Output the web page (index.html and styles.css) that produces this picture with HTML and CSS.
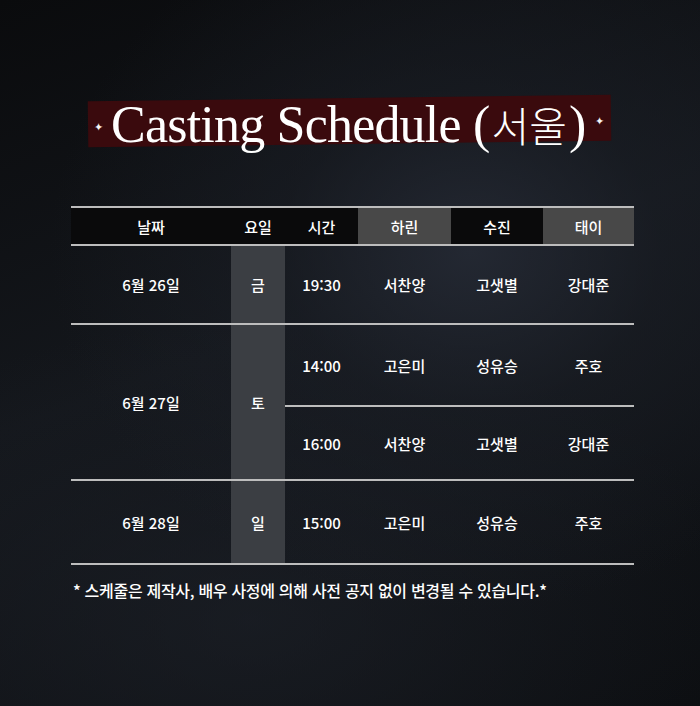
FILE: index.html
```html
<!DOCTYPE html>
<html lang="ko">
<head>
<meta charset="utf-8">
<title>Casting Schedule</title>
<link rel="stylesheet" href="styles.css">
</head>
<body>
<main class="page">
  <header class="title-wrap">
    <h1 class="title">
      <span class="dot">✦</span>
      <span class="title-text">Casting Schedule <span class="paren">(</span><span class="ko">서울</span><span class="paren">)</span></span>
      <span class="dot">✦</span>
    </h1>
  </header>

  <table class="schedule">
    <colgroup>
      <col class="c-date"><col class="c-day"><col class="c-time"><col class="c-a"><col class="c-b"><col class="c-c">
    </colgroup>
    <thead>
      <tr>
        <th>날짜</th><th>요일</th><th>시간</th><th class="hl">하린</th><th>수진</th><th class="hl">태이</th>
      </tr>
    </thead>
    <tbody>
      <tr class="r1">
        <td>6월 26일</td><td class="day">금</td><td>19:30</td><td>서찬양</td><td>고샛별</td><td>강대준</td>
      </tr>
      <tr class="r2a">
        <td rowspan="2">6월 27일</td><td rowspan="2" class="day">토</td><td>14:00</td><td>고은미</td><td>성유승</td><td>주호</td>
      </tr>
      <tr class="r2b">
        <td>16:00</td><td>서찬양</td><td>고샛별</td><td>강대준</td>
      </tr>
      <tr class="r3">
        <td>6월 28일</td><td class="day">일</td><td>15:00</td><td>고은미</td><td>성유승</td><td>주호</td>
      </tr>
    </tbody>
  </table>

  <p class="note">* 스케줄은 제작사, 배우 사정에 의해 사전 공지 없이 변경될 수 있습니다.*</p>
</main>
</body>
</html>
```

FILE: styles.css
```css
html, body {
  margin: 0;
  padding: 0;
}

body {
  width: 700px;
  height: 706px;
  overflow: hidden;
  color: #fff;
  font-family: "Noto Sans CJK KR", "Noto Sans", sans-serif;
  background:
    radial-gradient(ellipse 420px 360px at 470px 250px, rgba(38, 43, 54, 0.85) 0%, rgba(28, 32, 40, 0.5) 45%, rgba(0, 0, 0, 0) 100%),
    radial-gradient(ellipse 500px 300px at 250px 620px, rgba(30, 34, 42, 0.6) 0%, rgba(0, 0, 0, 0) 100%),
    linear-gradient(160deg, #0a0b0d 0%, #14171c 45%, #0c0e11 100%);
}

.page {
  padding-top: 98px;
}

.title-wrap {
  display: flex;
  justify-content: center;
}

.title {
  margin: 0 0 0 -1px;
  display: inline-flex;
  align-items: center;
  gap: 9px;
  height: 46px;
  padding: 0 8px 0 6px;
  background: #3a0a0d;
  transform: rotate(-0.7deg);
  font-family: "Liberation Serif", "Noto Sans CJK KR", serif;
  font-weight: 400;
  font-size: 52px;
  line-height: 46px;
  letter-spacing: -0.8px;
  white-space: nowrap;
}

.title-text {
  position: relative;
  top: 3px;
  transform: rotate(0.7deg);
}

.ko {
  font-family: "Noto Sans CJK KR", sans-serif;
  font-weight: 300;
  font-size: 41px;
  letter-spacing: 0;
  margin: 0 2px;
}

.paren {
  font-weight: 300;
}

.dot {
  font-family: "DejaVu Sans", sans-serif;
  font-size: 11px;
  line-height: 1;
  color: #f4f4f4;
  position: relative;
  top: 3px;
}

.schedule {
  margin: 62px 0 0 71px;
  width: 563px;
  table-layout: fixed;
  border-collapse: collapse;
  font-size: 15px;
  font-weight: 500;
  text-align: center;
}

.c-date { width: 160px; }
.c-day { width: 54px; }
.c-time { width: 73px; }
.c-a { width: 93px; }
.c-b { width: 92px; }
.c-c { width: 91px; }

.schedule th,
.schedule td {
  padding: 0;
  border-bottom: 2px solid #bdbdbd;
}

.schedule th {
  height: 36px;
  border-top: 2px solid #bdbdbd;
  background: #0a0a0b;
  font-weight: 500;
}

.schedule th.hl {
  background: #484848;
}

.schedule td.day {
  background: #3b3e43;
}

.r1 td { height: 77px; }
.r2a td { height: 80px; }
.r2b td { height: 72px; }
.r3 td { height: 82px; }

.note {
  margin: 13px 0 0 73px;
  font-size: 16px;
  font-weight: 500;
  letter-spacing: -0.3px;
}
```
